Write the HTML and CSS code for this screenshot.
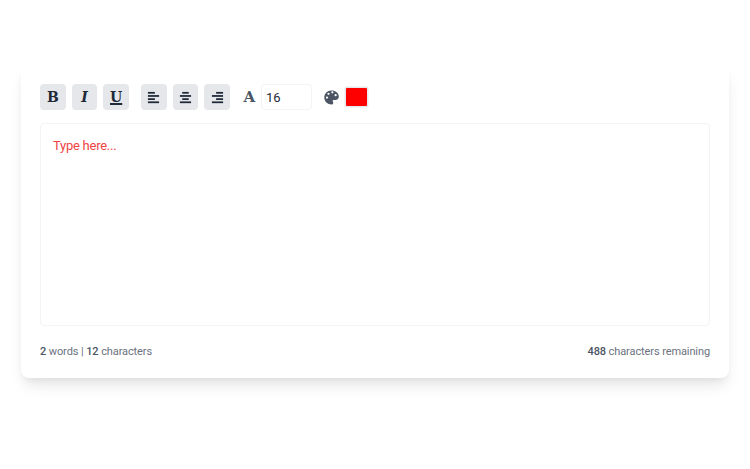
FILE: index.html
```html
<!DOCTYPE html>
<html lang="en">
<head>
<meta charset="utf-8">
<title>Text editor</title>
<link rel="stylesheet" href="styles.css">
</head>
<body>
<main class="card">
  <div class="toolbar">
    <div class="group">
      <button class="btn glyph" type="button">B</button>
      <button class="btn glyph glyph-i" type="button">I</button>
      <button class="btn glyph glyph-u" type="button">U</button>
    </div>
    <div class="group">
      <button class="btn" type="button"><svg class="ico" viewBox="0 0 14 14"><rect x="1" y="1" width="7.5" height="1.9"/><rect x="1" y="4.4" width="12" height="1.9"/><rect x="1" y="7.8" width="7.5" height="1.9"/><rect x="1" y="11.2" width="12" height="1.9"/></svg></button>
      <button class="btn" type="button"><svg class="ico" viewBox="0 0 14 14"><rect x="3.500" y="1" width="7" height="1.9"/><rect x="1" y="4.4" width="12" height="1.9"/><rect x="3.500" y="7.8" width="7" height="1.9"/><rect x="1" y="11.2" width="12" height="1.9"/></svg></button>
      <button class="btn" type="button"><svg class="ico" viewBox="0 0 14 14"><rect x="5.500" y="1" width="7.5" height="1.9"/><rect x="1" y="4.4" width="12" height="1.9"/><rect x="5.500" y="7.8" width="7.5" height="1.9"/><rect x="1" y="11.2" width="12" height="1.9"/></svg></button>
    </div>
    <div class="size">
      <span class="size-a">A</span>
      <input class="size-input" type="text" value="16">
    </div>
    <div class="color">
      <svg class="palette" viewBox="0 0 16 16"><path fill-rule="evenodd" d="M7.9.5C3.5.5.2 3.9.3 8.1c.1 4.200 3.500 7.400 7.700 7.400 1.100 0 1.900-.9 1.900-1.900 0-.5-.2-.9-.5-1.300-.5-.6-.1-1.600.8-1.600h1.900c2.200 0 3.700-1.700 3.700-3.800C15.800 3.300 12.300.5 7.900.5zM3.200 9.200a1.200 1.200 0 1 1 0-2.400 1.200 1.200 0 0 1 0 2.400zm1.600-3.900a1.200 1.200 0 1 1 0-2.400 1.200 1.200 0 0 1 0 2.400zm4.100-1.600a1.200 1.200 0 1 1 0-2.400 1.200 1.200 0 0 1 0 2.400zm3.500 3a1.200 1.200 0 1 1 0-2.400 1.200 1.200 0 0 1 0 2.400z"/></svg>
      <span class="swatch"></span>
    </div>
  </div>
  <div class="editor">Type here...</div>
  <div class="footer">
    <span><b>2</b> words | <b>12</b> characters</span>
    <span><b>488</b> characters remaining</span>
  </div>
</main>
</body>
</html>
```
FILE: styles.css
```css
* { box-sizing: border-box; }
html, body { margin: 0; height: 100%; }
body {
  background: #fff;
  font-family: Roboto, sans-serif;
  padding: 65px 21px 0;
  overflow: hidden;
}
.card {
  width: 708px;
  height: 313px;
  padding: 19px 19px 18px;
  background: #fff;
  border-radius: 8px;
  box-shadow: 0 10px 15px -3px rgba(0,0,0,.1), 0 4px 6px -2px rgba(0,0,0,.05);
  display: flex;
  flex-direction: column;
}
.toolbar { display: flex; align-items: flex-start; height: 26px; flex: none; }
.group { display: flex; gap: 6px; margin-right: 12px; }
.btn {
  width: 25.67px;
  height: 26px;
  padding: 0;
  border: 0;
  border-radius: 4px;
  background: #e5e7eb;
  color: #1f2937;
  display: flex;
  align-items: center;
  justify-content: center;
}
.glyph { font: 700 14px "DejaVu Serif", serif; color: #1f2937; }
.glyph-i { font-style: italic; }
.glyph-u { text-decoration: underline; text-decoration-thickness: 2px; text-underline-offset: 1px; }
.ico { width: 13px; height: 13px; fill: #1f2937; }
.size { display: flex; align-items: center; gap: 5px; margin-right: 12px; margin-left: 1px; }
.size-a { font: 700 15px "DejaVu Serif", serif; color: #4b5563; width: 13px; text-align: center; }
.size-input {
  width: 51px;
  height: 26px;
  border: 1px solid #f3f4f6;
  border-radius: 4px;
  padding: 0 4px;
  font: 13px Roboto, sans-serif;
  color: #1f2937;
  background: #fff;
}
.color { display: flex; align-items: center; height: 26px; gap: 6px; }
.palette { width: 15px; height: 15px; fill: #4b5563; }
.swatch {
  width: 23px;
  height: 20px;
  background: #f00;
  border: 1px solid #e5e7eb;
  box-shadow: 0 0 0 1px #f3f4f6;
  border-radius: 2px;
}
.editor {
  margin-top: 13px;
  height: 203px;
  flex: none;
  border: 1px solid #f3f4f6;
  border-radius: 4px;
  padding: 12px;
  font-size: 13px;
  letter-spacing: -0.25px;
  line-height: 20px;
  color: #ef4444;
}
.footer {
  display: flex;
  justify-content: space-between;
  margin-top: 18px;
  font-size: 11px;
  letter-spacing: -0.1px;
  line-height: 16px;
  color: #6b7280;
}
.footer b { font-weight: 500; color: #4b5563; }
```
